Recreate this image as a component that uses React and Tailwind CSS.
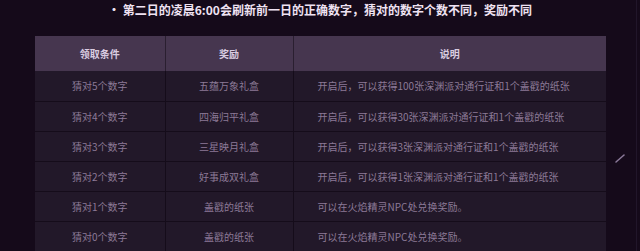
const rows = [
  ["猜对5个数字", "五蕴万象礼盒", "开启后，可以获得100张深渊派对通行证和1个盖戳的纸张"],
  ["猜对4个数字", "四海归平礼盒", "开启后，可以获得30张深渊派对通行证和1个盖戳的纸张"],
  ["猜对3个数字", "三星映月礼盒", "开启后，可以获得3张深渊派对通行证和1个盖戳的纸张"],
  ["猜对2个数字", "好事成双礼盒", "开启后，可以获得1张深渊派对通行证和1个盖戳的纸张"],
  ["猜对1个数字", "盖戳的纸张", "可以在火焰精灵NPC处兑换奖励。"],
  ["猜对0个数字", "盖戳的纸张", "可以在火焰精灵NPC处兑换奖励。"],
];

export default function App() {
  return (
    <div
      className="relative h-[251px] w-[640px] overflow-hidden bg-[#150a1a]"
      style={{ fontFamily: '"Noto Sans CJK SC", "Noto Sans", sans-serif' }}
    >
      <div className="absolute right-[3px] top-0 h-full w-px bg-[#21162a]" />
      <svg className="absolute left-[614px] top-[152px]" width="12" height="12" viewBox="0 0 12 12">
        <line x1="2" y1="10" x2="10" y2="3" stroke="#8b7a99" strokeWidth="1.5" strokeLinecap="round" />
      </svg>

      <p className="h-[36px] whitespace-nowrap pt-[1px] text-center text-[12px] font-bold leading-[17px] text-[#efe2f2]">
        • 第二日的凌晨6:00会刷新前一日的正确数字，猜对的数字个数不同，奖励不同
      </p>

      <table className="ml-[35px] w-[571px] table-fixed border-collapse whitespace-nowrap text-[10px]">
        <colgroup>
          <col className="w-[130px]" />
          <col className="w-[128px]" />
          <col />
        </colgroup>
        <thead>
          <tr className="h-[35px] bg-[#46364f] text-[#d9cce0]">
            <th className="border-r border-[#2a1f30] font-bold">领取条件</th>
            <th className="border-r border-[#2a1f30] font-bold">奖励</th>
            <th className="font-bold">说明</th>
          </tr>
        </thead>
        <tbody>
          {rows.map((r) => (
            <tr key={r[0]} className="h-[30px] border-b border-[#150c1a] bg-[#221829] text-[#8c7a97]">
              <td className="border-r border-[#150c1a] text-center">{r[0]}</td>
              <td className="border-r border-[#150c1a] text-center">{r[1]}</td>
              <td className="pl-[24px]">{r[2]}</td>
            </tr>
          ))}
        </tbody>
      </table>
    </div>
  );
}
